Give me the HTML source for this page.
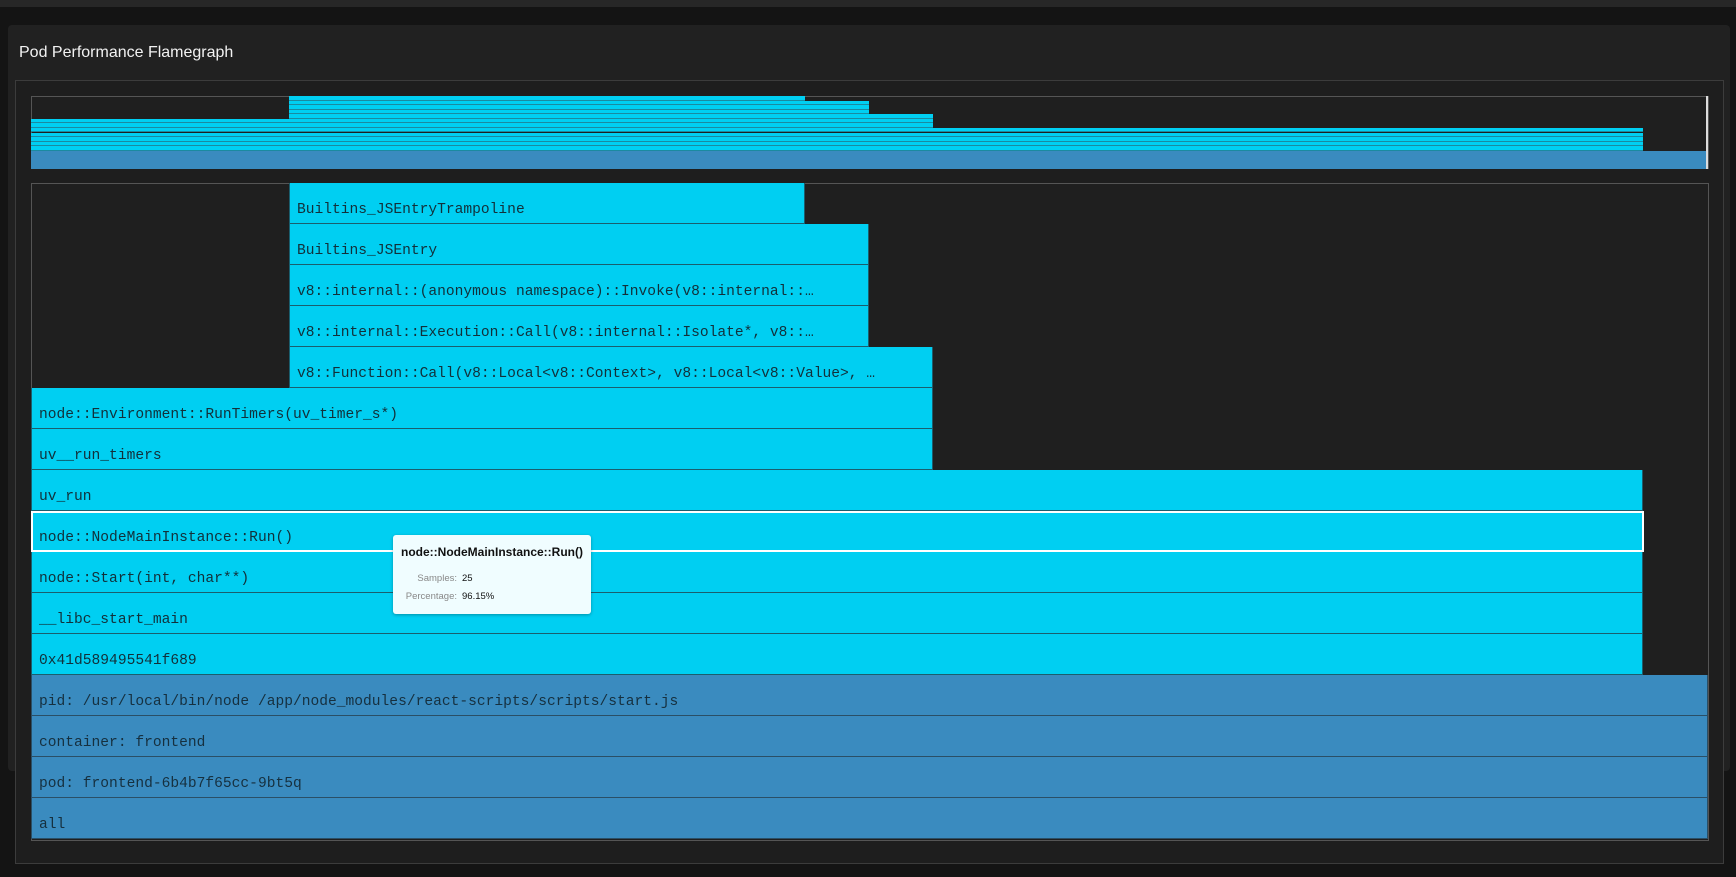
<!DOCTYPE html>
<html><head><meta charset="utf-8"><style>
*{margin:0;padding:0;box-sizing:border-box}
body{width:1736px;height:877px;background:#141414;position:relative;overflow:hidden;font-family:"Liberation Sans",sans-serif}
.abs{position:absolute}
.r{position:absolute;height:41px;border:1px solid #1b5e6e;border-top:none;background:#00cff2;font-family:"Liberation Mono",monospace;font-size:14.6px;color:#12303a;padding-left:7px;line-height:41px;padding-top:7px;white-space:nowrap;overflow:hidden}
.b{background:#3a8bbf;border-color:#2a4f66;color:#16303f}
.m{position:absolute;height:4.56px;background:#00cff2;border-bottom:1px solid #1b8aa0}
.mb{background:#3a8bbf;border-bottom:1px solid #3a8bbf}
</style></head><body>
<div class="abs" style="left:0;top:0;width:1736px;height:7px;background:#272727"></div>
<div class="abs" style="left:8px;top:25px;width:1722px;height:746px;background:#212121;border-radius:4px"></div>
<div class="abs" style="left:19px;top:44px;font-size:16px;color:#f2f2f2">Pod Performance Flamegraph</div>
<div class="abs" style="left:15px;top:80px;width:1709px;height:784px;border:1px solid #3c3c3c;background:#1e1e1e"></div>
<!-- minimap -->
<div class="abs" style="left:31px;top:96px;width:1678px;height:73px;border:1px solid #555;background:#1f1f1f"></div>
<div class="m" style="left:289px;top:96px;width:516px"></div>
<div class="m" style="left:289px;top:100.6px;width:580px"></div>
<div class="m" style="left:289px;top:105.1px;width:580px"></div>
<div class="m" style="left:289px;top:109.7px;width:580px"></div>
<div class="m" style="left:289px;top:114.2px;width:644px"></div>
<div class="m" style="left:31px;top:118.8px;width:902px"></div>
<div class="m" style="left:31px;top:123.4px;width:902px"></div>
<div class="m" style="left:31px;top:127.9px;width:1612px"></div>
<div class="m" style="left:31px;top:132.5px;width:1612px"></div>
<div class="m" style="left:31px;top:137px;width:1612px"></div>
<div class="m" style="left:31px;top:141.6px;width:1612px"></div>
<div class="m" style="left:31px;top:146.1px;width:1612px"></div>
<div class="m mb" style="left:31px;top:150.7px;width:1677px;height:18.3px"></div>
<div class="abs" style="left:1706px;top:96px;width:2px;height:73px;background:#ddd"></div>
<!-- main -->
<div class="abs" style="left:31px;top:183px;width:1678px;height:658px;border:1px solid #555;background:#1f1f1f"></div>
<div class="r" style="left:289px;top:183px;width:516px">Builtins_JSEntryTrampoline</div>
<div class="r" style="left:289px;top:224px;width:580px">Builtins_JSEntry</div>
<div class="r" style="left:289px;top:265px;width:580px">v8::internal::(anonymous namespace)::Invoke(v8::internal::…</div>
<div class="r" style="left:289px;top:306px;width:580px">v8::internal::Execution::Call(v8::internal::Isolate*, v8::…</div>
<div class="r" style="left:289px;top:347px;width:644px">v8::Function::Call(v8::Local&lt;v8::Context&gt;, v8::Local&lt;v8::Value&gt;, …</div>
<div class="r" style="left:31px;top:388px;width:902px">node::Environment::RunTimers(uv_timer_s*)</div>
<div class="r" style="left:31px;top:429px;width:902px">uv__run_timers</div>
<div class="r" style="left:31px;top:470px;width:1612px">uv_run</div>
<div class="r" style="left:31px;top:511px;width:1613px;border:2px solid #fff;padding-left:6px;padding-top:5px">node::NodeMainInstance::Run()</div>
<div class="r" style="left:31px;top:552px;width:1612px">node::Start(int, char**)</div>
<div class="r" style="left:31px;top:593px;width:1612px">__libc_start_main</div>
<div class="r" style="left:31px;top:634px;width:1612px">0x41d589495541f689</div>
<div class="r b" style="left:31px;top:675px;width:1677px">pid: /usr/local/bin/node /app/node_modules/react-scripts/scripts/start.js</div>
<div class="r b" style="left:31px;top:716px;width:1677px">container: frontend</div>
<div class="r b" style="left:31px;top:757px;width:1677px">pod: frontend-6b4b7f65cc-9bt5q</div>
<div class="r b" style="left:31px;top:798px;width:1677px">all</div>
<!-- tooltip -->
<div class="abs" style="left:393px;top:535px;width:198px;height:79px;background:#f0fdff;border-radius:3px;box-shadow:0 1px 3px rgba(0,0,0,.3)">
<div class="abs" style="left:8px;top:10px;font-size:12px;font-weight:bold;color:#111;white-space:nowrap">node::NodeMainInstance::Run()</div>
<div class="abs" style="left:0;top:38px;width:64px;text-align:right;font-size:9.5px;color:#888">Samples:</div>
<div class="abs" style="left:69px;top:38px;font-size:9.5px;color:#111">25</div>
<div class="abs" style="left:0;top:56px;width:64px;text-align:right;font-size:9.5px;color:#888">Percentage:</div>
<div class="abs" style="left:69px;top:56px;font-size:9.5px;color:#111">96.15%</div>
</div>
</body></html>
